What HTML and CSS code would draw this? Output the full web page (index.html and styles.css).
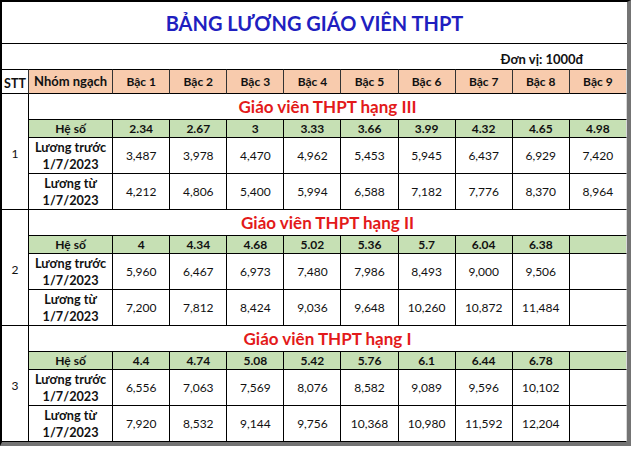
FILE: index.html
```html
<!DOCTYPE html>
<html lang="vi">
<head>
<meta charset="utf-8">
<title>Bảng lương giáo viên THPT</title>
<link rel="stylesheet" href="styles.css">
</head>
<body>
<div class="sheet">
  <div class="title">BẢNG LƯƠNG GIÁO VIÊN THPT</div>
  <div class="unit">Đơn vị: 1000đ</div>
  <table class="grid">
    <colgroup>
      <col class="c-stt"><col class="c-name">
      <col class="c-b"><col class="c-b"><col class="c-b"><col class="c-b"><col class="c-b"><col class="c-b"><col class="c-b"><col class="c-b"><col class="c-b">
    </colgroup>
    <tr class="r-head">
      <td class="stt-head">STT</td>
      <td class="name-head">Nhóm ngạch</td><td>Bậc 1</td><td>Bậc 2</td><td>Bậc 3</td><td>Bậc 4</td><td>Bậc 5</td><td>Bậc 6</td><td>Bậc 7</td><td>Bậc 8</td><td class="last">Bậc 9</td>
    </tr>

    <tr class="r-group">
      <td class="stt" rowspan="4">1</td>
      <td class="group last" colspan="10">Giáo viên THPT hạng III</td>
    </tr>
    <tr class="r-coef">
      <td>Hệ số</td><td>2.34</td><td>2.67</td><td>3</td><td>3.33</td><td>3.66</td><td>3.99</td><td>4.32</td><td>4.65</td><td class="last">4.98</td>
    </tr>
    <tr class="r-data">
      <td class="label">Lương trước<br>1/7/2023</td><td>3,487</td><td>3,978</td><td>4,470</td><td>4,962</td><td>5,453</td><td>5,945</td><td>6,437</td><td>6,929</td><td class="last">7,420</td>
    </tr>
    <tr class="r-data">
      <td class="label">Lương từ<br>1/7/2023</td><td>4,212</td><td>4,806</td><td>5,400</td><td>5,994</td><td>6,588</td><td>7,182</td><td>7,776</td><td>8,370</td><td class="last">8,964</td>
    </tr>

    <tr class="r-group">
      <td class="stt" rowspan="4">2</td>
      <td class="group last" colspan="10">Giáo viên THPT hạng II</td>
    </tr>
    <tr class="r-coef">
      <td>Hệ số</td><td>4</td><td>4.34</td><td>4.68</td><td>5.02</td><td>5.36</td><td>5.7</td><td>6.04</td><td>6.38</td><td class="last"></td>
    </tr>
    <tr class="r-data">
      <td class="label">Lương trước<br>1/7/2023</td><td>5,960</td><td>6,467</td><td>6,973</td><td>7,480</td><td>7,986</td><td>8,493</td><td>9,000</td><td>9,506</td><td class="last"></td>
    </tr>
    <tr class="r-data">
      <td class="label">Lương từ<br>1/7/2023</td><td>7,200</td><td>7,812</td><td>8,424</td><td>9,036</td><td>9,648</td><td>10,260</td><td>10,872</td><td>11,484</td><td class="last"></td>
    </tr>

    <tr class="r-group">
      <td class="stt" rowspan="4">3</td>
      <td class="group last" colspan="10">Giáo viên THPT hạng I</td>
    </tr>
    <tr class="r-coef">
      <td>Hệ số</td><td>4.4</td><td>4.74</td><td>5.08</td><td>5.42</td><td>5.76</td><td>6.1</td><td>6.44</td><td>6.78</td><td class="last"></td>
    </tr>
    <tr class="r-data">
      <td class="label">Lương trước<br>1/7/2023</td><td>6,556</td><td>7,063</td><td>7,569</td><td>8,076</td><td>8,582</td><td>9,089</td><td>9,596</td><td>10,102</td><td class="last"></td>
    </tr>
    <tr class="r-data">
      <td class="label">Lương từ<br>1/7/2023</td><td>7,920</td><td>8,532</td><td>9,144</td><td>9,756</td><td>10,368</td><td>10,980</td><td>11,592</td><td>12,204</td><td class="last"></td>
    </tr>
  </table>
</div>
</body>
</html>
```
FILE: styles.css
```css
html, body {
  margin: 0;
  padding: 0;
  background: #fff;
}

body {
  font-family: Lato, "Noto Sans", "Liberation Sans", sans-serif;
  color: #111;
  font-size: 12px;
}

.sheet {
  width: 625px;
  border-top: 2px solid #000;
  border-left: 2px solid #000;
  border-right: 4px solid #747474;
  border-bottom: 4px solid #747474;
}

.title {
  height: 41px;
  border-bottom: 1px solid #000;
  display: flex;
  align-items: center;
  justify-content: center;
  font-weight: 700;
  font-size: 20px;
  color: #1f1fc0;
}

.unit {
  height: 25px;
  display: flex;
  align-items: flex-end;
  justify-content: flex-end;
  padding-right: 44px;
  box-sizing: border-box;
  font-weight: 700;
  font-size: 13px;
  line-height: 20px;
}

.grid {
  width: 625px;
  table-layout: fixed;
  border-collapse: separate;
  border-spacing: 0;
}

.c-stt { width: 27px; }
.c-name { width: 84px; }
.c-b { width: 57px; }

.grid td {
  padding: 0;
  text-align: center;
  vertical-align: middle;
  border-right: 1px solid #000;
  border-bottom: 1px solid #000;
  box-sizing: border-box;
  line-height: 17px;
  white-space: nowrap;
}

.grid td.last {
  border-right: 1px solid #d8d8d8;
}

.r-head { height: 25px; }
.r-head td {
  border-top: 1px solid #000;
  background: #f8cbad;
  font-weight: 700;
  border-right-color: #333;
}
.r-head td.name-head {
  font-size: 13px;
}
.r-head td.stt-head {
  background: #fff;
  vertical-align: bottom;
  line-height: 18px;
  font-size: 12.5px;
}

.r-group { height: 26px; }
.grid td.group {
  font-weight: 700;
  font-size: 17px;
  color: #e31a1a;
  line-height: 22px;
}

.grid td.stt {
  padding-top: 4px;
}

.r-coef { height: 18px; }
.r-coef td {
  background: #c6e0b4;
  font-weight: 700;
  line-height: 16px;
}

.r-data { height: 36px; }
.grid td.label {
  font-weight: 700;
  font-size: 12.7px;
}
```
